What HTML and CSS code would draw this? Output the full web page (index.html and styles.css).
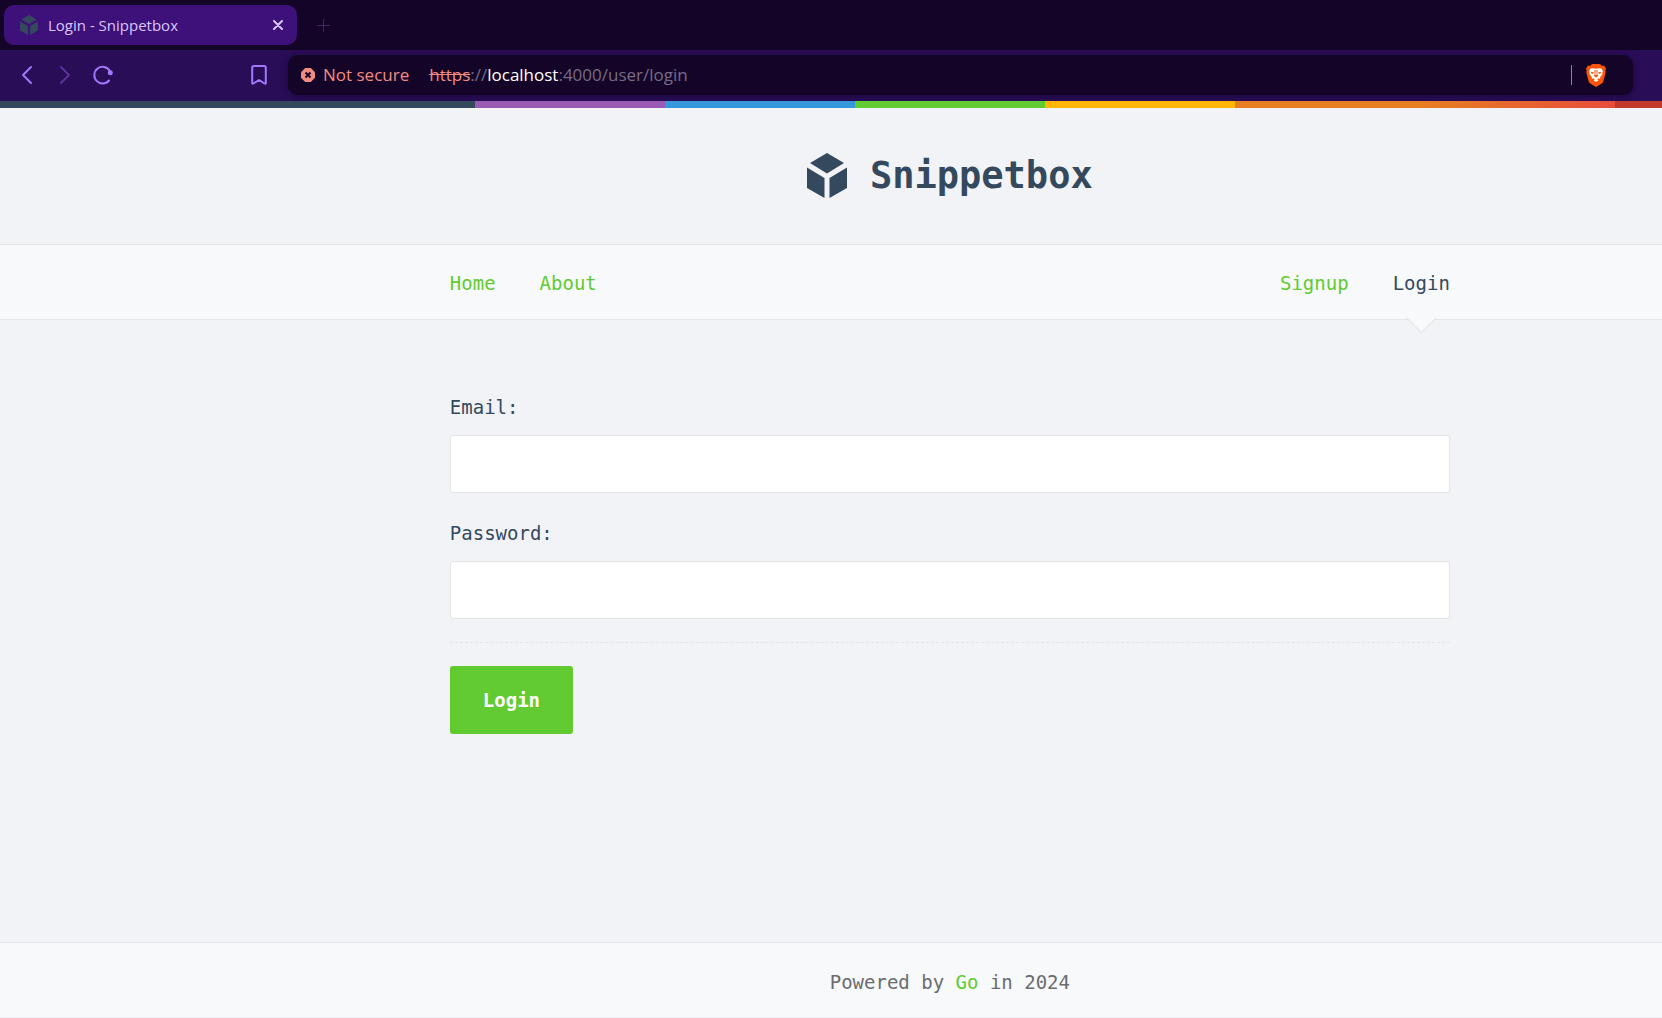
FILE: index.html
```html
<!DOCTYPE html>
<html lang="en">
<head>
<meta charset="utf-8">
<title>Login - Snippetbox</title>
<link rel="stylesheet" href="styles.css">
</head>
<body>
<svg class="defs" width="0" height="0" aria-hidden="true">
  <symbol id="cube" viewBox="0 0 40 45">
    <path d="M20 0 37 10 20 20.500 3 10zM0 14.500 17.500 25V45L0 35zM40 14.500 22.500 25V45L40 35z"/>
  </symbol>
</svg>

<div class="browser">
  <div class="tabs">
    <div class="tab">
      <svg class="favicon" width="18" height="20"><use href="#cube"/></svg>
      <span class="tab-title">Login - Snippetbox</span>
      <button class="icon-button tab-close" type="button" aria-label="Close tab">
        <svg width="10" height="10" viewBox="0 0 10 10"><path d="M1 1l8 8M9 1l-8 8"/></svg>
      </button>
    </div>
    <button class="icon-button tab-new" type="button" aria-label="New tab">
      <svg width="13" height="13" viewBox="0 0 13 13"><path d="M6.500 0v13M0 6.500h13"/></svg>
    </button>
  </div>
  <div class="toolbar">
    <div class="history">
      <button class="icon-button" type="button" aria-label="Back">
        <svg width="20" height="20" viewBox="0 0 20 20"><path d="M14 2 6 10l8 8"/></svg>
      </button>
      <button class="icon-button is-dim" type="button" aria-label="Forward">
        <svg width="20" height="20" viewBox="0 0 20 20"><path d="M6 2l8 8-8 8"/></svg>
      </button>
      <button class="icon-button" type="button" aria-label="Reload">
        <svg width="20" height="20" viewBox="0 0 20 20"><path d="M16 15.500A8.300 8.300 0 1 1 16.800 6"/><circle class="dot" cx="17.300" cy="7.800" r="2.500"/></svg>
      </button>
    </div>
    <button class="icon-button bookmark" type="button" aria-label="Bookmark">
      <svg width="16" height="20" viewBox="0 0 16 20"><path d="M3 1h10q1.800 0 1.800 1.800V18q0 1.300-1.200.5L8 15l-5.600 3.500q-1.200.8-1.200-.5V2.800Q1.200 1 3 1z"/></svg>
    </button>
    <div class="address">
      <svg class="warning" width="14" height="14" viewBox="0 0 14 14"><path class="badge" d="M4.200 0h5.600L14 4.200v5.600L9.800 14H4.200L0 9.800V4.200z"/><path class="cross" d="M4.500 4.500l5 5M9.500 4.500l-5 5"/></svg>
      <span class="insecure">Not secure</span>
      <span class="url"><s>https</s>://<b>localhost</b>:4000/user/login</span>
      <span class="divider"></span>
      <button class="icon-button" type="button" aria-label="Brave Shields">
        <svg class="lion" width="20" height="23" viewBox="0 0 20 23">
          <path fill="#fb5408" d="M6 0h8l1.600 1.800 2.200-.3L20 4.500l-.7 2 .5 1.500-2.400 9.300q-.5 1.500-2 2.500L10 23l-5.400-3.200q-1.500-1-2-2.500L.2 8l.5-1.500-.7-2 2.200-3 2.200.3z"/>
          <path fill="#fff" d="M7 4.300l3 .5 3-.5 2.500.2L17 7.500l-.7 1.300.2 1.200-2.400 3.300.2 1.400-2.200-.3-.8 1 1.200 1L10 17.700l-2.500-1.300 1.200-1-.8-1-2.200.3.200-1.400L3.500 10l.2-1.200L3 7.500l1.500-3z"/>
          <path fill="#fb5408" d="M5 7.800l3 .8-1.200 1.500-1.600-.8zM15 7.800l-3 .8 1.200 1.500 1.600-.8zM8.400 5.800l1.200.8-.3 4 .7.600.7-.6-.3-4 1.200-.8-.2 4.700.8 1.500-2.200 1.400L7.800 12l.8-1.500z"/>
        </svg>
      </button>
    </div>
  </div>
</div>

<div class="viewport">
  <div class="page">
    <header class="banner">
      <h1><a href="#"><svg width="40" height="45"><use href="#cube"/></svg>Snippetbox</a></h1>
    </header>
    <nav class="menu">
      <div class="column">
        <div class="links"><a href="#">Home</a><a href="#">About</a></div>
        <div class="links"><a href="#">Signup</a><a class="live" href="#">Login</a></div>
      </div>
    </nav>
    <main class="column">
      <form>
        <div class="field">
          <label for="email">Email:</label>
          <input id="email" type="email" name="email">
        </div>
        <div class="field">
          <label for="password">Password:</label>
          <input id="password" type="password" name="password">
        </div>
        <div class="actions"><button class="submit" type="button">Login</button></div>
      </form>
    </main>
    <footer>Powered by <a href="#">Go</a> in 2024</footer>
  </div>
</div>
</body>
</html>
```
FILE: styles.css
```css
* {
  box-sizing: border-box;
}

body {
  margin: 0;
  min-height: 100vh;
  display: flex;
  flex-direction: column;
  background: #f1f3f6;
  color: #34495e;
  font: 19px/28px "DejaVu Sans Mono", monospace;
}

a {
  color: #62cb31;
  text-decoration: none;
}

.defs {
  position: absolute;
}

/* Browser frame */

.browser {
  color: #d9c6ff;
  font-family: "Open Sans", "Noto Sans", sans-serif;
}

.icon-button {
  display: flex;
  padding: 0;
  border: 0;
  background: none;
  color: #a277ff;
}

.icon-button svg {
  fill: none;
  stroke: currentColor;
  stroke-width: 2;
  stroke-linecap: round;
  stroke-linejoin: round;
}

.icon-button.is-dim {
  color: #5b3499;
}

.tabs {
  display: flex;
  align-items: center;
  gap: 20px;
  height: 50px;
  padding: 0 4px;
  background: #140427;
}

.tab {
  display: flex;
  align-items: center;
  width: 293px;
  height: 40px;
  padding: 0 14px 0 16px;
  border-radius: 10px;
  background: #3d1179;
}

.favicon {
  fill: #34495e;
}

.tab-title {
  flex: 1;
  padding-left: 10px;
  font-size: 15px;
  line-height: 20px;
}

.icon-button.tab-close {
  color: #d9c6ff;
}

.icon-button.tab-new {
  color: #41246b;
}

.icon-button.tab-new svg {
  stroke-width: 1;
}

.toolbar {
  display: flex;
  align-items: center;
  height: 51px;
  padding: 0 29px 1px 17px;
  background: #290d57;
}

.history {
  display: flex;
  gap: 18px;
}

.icon-button .dot {
  fill: currentColor;
  stroke: none;
}

.bookmark {
  margin: 0 21px 0 138px;
}

.address {
  flex: 1;
  display: flex;
  align-items: center;
  height: 40px;
  padding: 0 27px 0 13px;
  border-radius: 10px;
  background: #140427;
  box-shadow: 0 1px 6px #1b073c;
  font-size: 17px;
  line-height: 24px;
}

.badge {
  fill: #f28b82;
}

.cross {
  fill: none;
  stroke: #140427;
  stroke-width: 2;
}

.insecure {
  margin: 0 20px 0 8px;
  color: #f28b82;
}

.url {
  flex: 1;
  color: #776b87;
}

.url s {
  color: #f28b82;
}

.url b {
  color: #fff;
  font-weight: 400;
}

.divider {
  width: 1px;
  height: 20px;
  margin-right: 14px;
  background: #8d8299;
}

.icon-button .lion {
  stroke: none;
}

/* The site is laid out wider than the visible window */

.viewport {
  flex: 1;
  display: flex;
  overflow: hidden;
}

.page {
  flex: none;
  display: flex;
  flex-direction: column;
  width: 114.3%;
}

.column {
  width: 1000px;
  margin: 0 auto;
}

.banner {
  padding: 44px 0 38px;
  background: linear-gradient(to right, #34495e 25%, #9b59b6 25% 35%, #3498db 35% 45%, #62cb31 45% 55%, #ffb606 55% 65%, #e67e22 65% 75%, #e74c3c 85%, #c0392b 85%) top / 100% 7px no-repeat;
}

.banner h1 {
  margin: 0;
  font-size: 37px;
  line-height: 61px;
}

.banner a {
  display: flex;
  justify-content: center;
  align-items: center;
  gap: 23px;
  color: #34495e;
}

.banner svg {
  fill: #34495e;
}

.menu {
  border: 1px solid #e4e5e7;
  border-width: 1px 0;
  background: #f7f9fa;
}

.menu .column,
.links {
  display: flex;
  justify-content: space-between;
}

.links {
  gap: 44px;
}

.links a {
  padding: 24px 0 22px;
}

.links .live {
  position: relative;
  color: #34495e;
}

.live::after {
  content: "";
  position: absolute;
  bottom: -10px;
  left: calc(50% - 10px);
  width: 20px;
  height: 20px;
  border: 1px solid #e4e5e7;
  border-width: 0 1px 1px 0;
  background: linear-gradient(135deg, transparent 50%, #f7f9fa 50%);
  transform: rotate(45deg);
}

main {
  flex: 1;
  padding-top: 73px;
}

.field {
  margin-bottom: 26px;
}

.field label {
  display: block;
  margin-bottom: 14px;
}

.field input {
  display: block;
  width: 100%;
  height: 58px;
  padding: 0 18px;
  border: 1px solid #e4e5e7;
  border-radius: 3px;
  background: #fff;
  color: #6a6c6f;
  font: inherit;
}

.actions {
  margin-top: -3px;
  padding-top: 23px;
  border-top: 1px dashed #e4e5e7;
}

.submit {
  padding: 20px 33px;
  border: 0;
  border-radius: 3px;
  background: #62cb31;
  color: #fff;
  font: inherit;
  font-weight: 700;
}

footer {
  padding: 25px 0 21px;
  border: 1px solid #e4e5e7;
  border-width: 1px 0;
  border-bottom-color: #eef0f3;
  background: #f7f9fa;
  color: #6a6c6f;
  text-align: center;
}
```
